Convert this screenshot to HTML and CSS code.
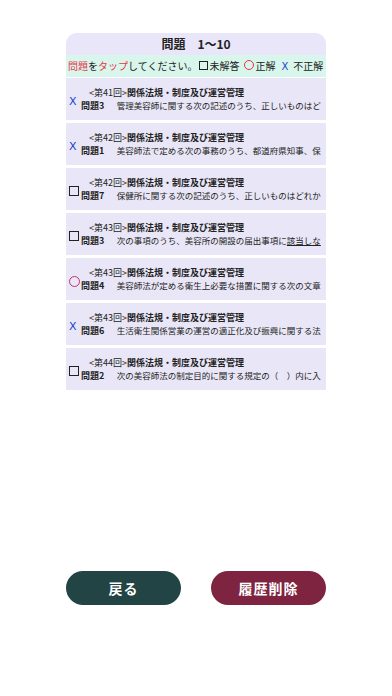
FILE: index.html
```html
<!DOCTYPE html>
<html lang="ja">
<head>
    <meta charset="UTF-8">
    <meta name="viewport" content="width=device-width, initial-scale=1.0">
    <title>履歴</title>
    <link rel="stylesheet" href="styles.css">
</head>
<body>
    <div class="page">
        <div class="panel">
            <div class="panel-title">問題　1〜10</div>
            <div class="legend">
                <span class="red">問題</span>を<span class="red">タップ</span>してください。<span class="mark-sq"></span>未解答<span class="mark-ok"></span>正解<span class="mark-ng">X</span>不正解
            </div>
            <ul class="list">
                <li class="item">
                    <span class="icon ng">X</span>
                    <div class="text">
                        <div class="head">&lt;第41回&gt;<b>関係法規・制度及び運営管理</b></div>
                        <div class="body"><b>問題3</b>　管理美容師に関する次の記述のうち、正しいものはど</div>
                    </div>
                </li>
                <li class="item">
                    <span class="icon ng">X</span>
                    <div class="text">
                        <div class="head">&lt;第42回&gt;<b>関係法規・制度及び運営管理</b></div>
                        <div class="body"><b>問題1</b>　美容師法で定める次の事務のうち、都道府県知事、保</div>
                    </div>
                </li>
                <li class="item">
                    <span class="icon"><span class="sq"></span></span>
                    <div class="text">
                        <div class="head">&lt;第42回&gt;<b>関係法規・制度及び運営管理</b></div>
                        <div class="body"><b>問題7</b>　保健所に関する次の記述のうち、正しいものはどれか</div>
                    </div>
                </li>
                <li class="item">
                    <span class="icon"><span class="sq"></span></span>
                    <div class="text">
                        <div class="head">&lt;第43回&gt;<b>関係法規・制度及び運営管理</b></div>
                        <div class="body"><b>問題3</b>　次の事項のうち、美容所の開設の届出事項に<u>該当しな</u></div>
                    </div>
                </li>
                <li class="item">
                    <span class="icon"><span class="ok"></span></span>
                    <div class="text">
                        <div class="head">&lt;第43回&gt;<b>関係法規・制度及び運営管理</b></div>
                        <div class="body"><b>問題4</b>　美容師法が定める衛生上必要な措置に関する次の文章</div>
                    </div>
                </li>
                <li class="item">
                    <span class="icon ng">X</span>
                    <div class="text">
                        <div class="head">&lt;第43回&gt;<b>関係法規・制度及び運営管理</b></div>
                        <div class="body"><b>問題6</b>　生活衛生関係営業の運営の適正化及び振興に関する法</div>
                    </div>
                </li>
                <li class="item">
                    <span class="icon"><span class="sq"></span></span>
                    <div class="text">
                        <div class="head">&lt;第44回&gt;<b>関係法規・制度及び運営管理</b></div>
                        <div class="body"><b>問題2</b>　次の美容師法の制定目的に関する規定の（　）内に入</div>
                    </div>
                </li>
            </ul>
        </div>

        <div class="buttons">
            <button class="btn btn-back">戻る</button>
            <button class="btn btn-delete">履歴削除</button>
        </div>
    </div>
</body>
</html>
```

FILE: styles.css
```css
body {
    margin: 0;
    background-color: #ffffff;
    font-family: "Noto Sans CJK JP", "Noto Sans", sans-serif;
    color: #222222;
}
.page {
    width: 392px;
    height: 696px;
    padding-top: 33px;
    box-sizing: border-box;
}
.panel {
    width: 260px;
    margin: 0 auto;
}
.panel-title {
    background-color: #e8e6f8;
    border-radius: 11px 11px 0 0;
    height: 22px;
    line-height: 22px;
    text-align: center;
    font-size: 12px;
    font-weight: 700;
}
.legend {
    background-color: #d9f6ec;
    height: 22px;
    line-height: 22px;
    font-size: 10px;
    padding-left: 2px;
    white-space: nowrap;
}
.red {
    color: #e8334a;
}
.mark-sq {
    display: inline-block;
    width: 7px;
    height: 7px;
    border: 1px solid #222;
    margin: 0 1px 0 2px;
}
.mark-ok {
    display: inline-block;
    width: 8px;
    height: 8px;
    border: 1px solid #e8334a;
    border-radius: 50%;
    margin: 0 1px 0 5px;
}
.mark-ng {
    color: #1a3fd0;
    font-family: "DejaVu Sans", sans-serif;
    margin: 0 5px 0 6px;
}
.list {
    list-style-type: none;
    margin: 1px 0 0;
    padding: 0;
}
.item {
    display: flex;
    align-items: center;
    background-color: #e9e7f7;
    height: 42px;
    margin-bottom: 3px;
    overflow: hidden;
}
.icon {
    width: 12px;
    flex: 0 0 12px;
    padding-left: 3px;
    margin-top: 4px;
    display: flex;
    align-items: center;
}
.icon.ng {
    color: #1a3fd0;
    font-family: "DejaVu Sans", sans-serif;
    font-size: 11px;
}
.sq {
    display: block;
    width: 8px;
    height: 8px;
    border: 1px solid #222;
}
.ok {
    display: block;
    width: 9px;
    height: 9px;
    border: 1px solid #c2306e;
    border-radius: 50%;
}
.text {
    flex: 1;
    min-width: 0;
    font-size: 9px;
    line-height: 12px;
    white-space: nowrap;
    overflow: hidden;
}
.head {
    padding-left: 8px;
}
.body {
    font-size: 8.5px;
}
.body b {
    font-size: 9px;
    margin-right: 4px;
}
.buttons {
    display: flex;
    justify-content: space-between;
    width: 260px;
    margin: 181px auto 0;
}
.btn {
    width: 115px;
    height: 34px;
    border: none;
    border-radius: 17px;
    color: #ffffff;
    font-family: "Noto Sans CJK JP", sans-serif;
    font-weight: 700;
    font-size: 14px;
    letter-spacing: 1px;
}
.btn-back {
    background-color: #224444;
}
.btn-delete {
    background-color: #7e2340;
}
```
